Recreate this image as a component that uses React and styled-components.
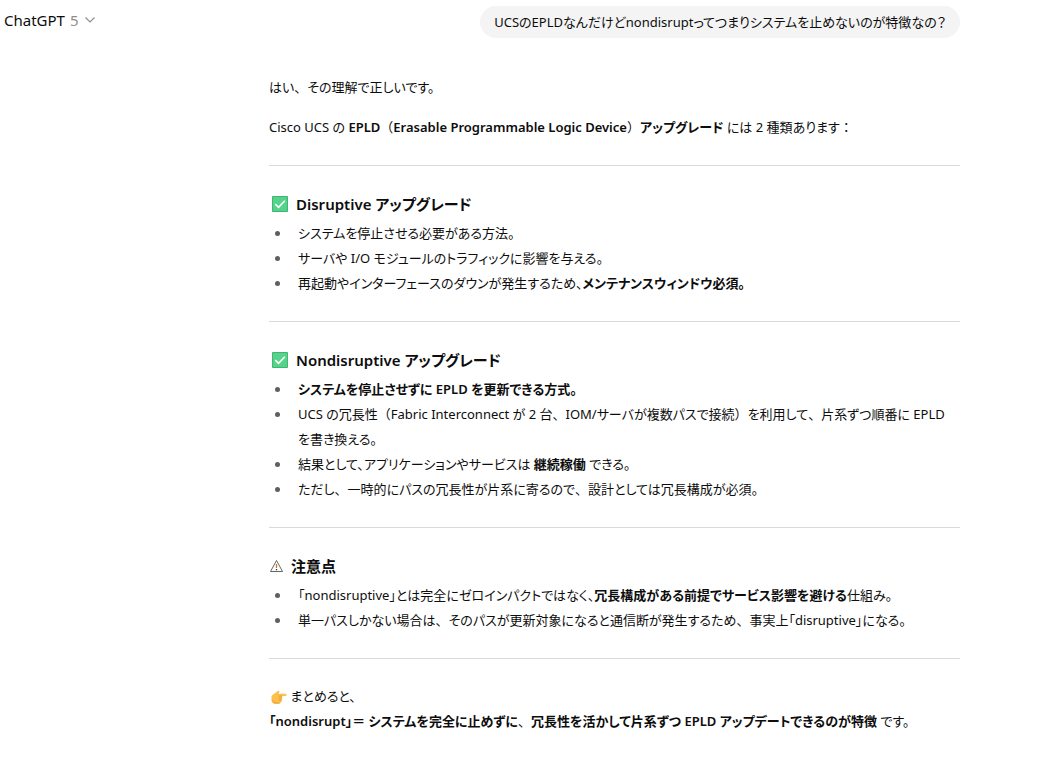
import React from "react";
import styled, { createGlobalStyle } from "styled-components";

const GlobalStyle = createGlobalStyle`
  *, *::before, *::after { box-sizing: border-box; }
  body {
    margin: 0;
    background: #fff;
    color: #0d0d0d;
    font-family: "Noto Sans", "Noto Sans CJK JP", sans-serif;
    font-size: 13px;
    line-height: 25px;
    font-feature-settings: "palt";
  }
`;

const Page = styled.div`
  display: flex;
  align-items: flex-start;
  padding-right: 80px;
`;

const ModelBar = styled.header`
  flex: 0 0 269px;
  padding: 8px 4px;
`;

const ModelButton = styled.button`
  display: flex;
  align-items: center;
  gap: 5px;
  padding: 0;
  border: 0;
  background: none;
  color: inherit;
  font: inherit;
  font-size: 15px;
  line-height: 24px;
  cursor: pointer;
`;

const Version = styled.span`
  color: #8f8f8f;
`;

const Thread = styled.main`
  flex: 1;
  min-width: 0;
  display: flex;
  flex-direction: column;
  padding: 6px 0 24px;
`;

const UserBubble = styled.div`
  align-self: flex-end;
  padding: 4px 14px;
  border-radius: 16px;
  background: #f4f4f4;
  line-height: 24px;
`;

const Answer = styled.article`
  padding-top: 37px;
`;

const Paragraph = styled.p`
  margin: 0 0 15px;

  &:last-child { margin-bottom: 0; }
`;

const Divider = styled.hr`
  height: 1px;
  margin: 25px 0;
  border: 0;
  background: #d9d9d9;
`;

const Heading = styled.h3`
  display: flex;
  align-items: center;
  gap: 8px;
  margin: 0 0 4px;
  font-size: 15px;
  font-weight: 600;
  line-height: 26px;
`;

const List = styled.ul`
  margin: 0;
  padding: 0;
  list-style: none;
`;

const Item = styled.li`
  display: grid;
  grid-template-columns: 29px 1fr;

  &::before {
    content: "";
    width: 5px;
    height: 5px;
    margin: 10px 0 0 6px;
    border-radius: 50%;
    background: #5f5f5f;
  }
`;

const Strong = styled.strong`
  font-weight: 600;
`;

/* Punctuation set at its full em width instead of the proportional one. */
const Full = styled.span`
  font-feature-settings: normal;
  font-weight: 400;
`;

const Phrase = styled.span`
  white-space: nowrap;
`;

const Icon = styled.svg`
  flex: none;
  width: ${(p) => p.$size}px;
  height: ${(p) => p.$size}px;
  margin-left: ${(p) => p.$inset || 0}px;
  vertical-align: -4px;
`;

const CheckIcon = () => (
  <Icon $size={16} $inset={3} viewBox="0 0 17 17" role="img" aria-label="チェック">
    <rect width="17" height="17" rx="1" fill="#3fb573" />
    <rect x="1" y="1" width="15" height="15" rx="1" fill="#55d38b" />
    <path d="M3.5 8.6 7 12l6.6-7" fill="none" stroke="#fff" strokeWidth="1.7" />
  </Icon>
);

const WarningIcon = () => (
  <Icon $size={14} viewBox="0 0 14 14" role="img" aria-label="注意">
    <path d="M7.500 1.500 13.500 12.500H1.500z" fill="#fff" stroke="#555" strokeWidth="0.9" strokeLinejoin="round" />
    <path d="M7.500 5v4" stroke="#c87820" strokeWidth="1.3" />
    <path d="M7.500 10v1.300" stroke="#333" strokeWidth="1.3" />
  </Icon>
);

const PointIcon = () => (
  <Icon $size={16} $inset={2} viewBox="0 0 16 16" role="img" aria-label="右を指す手">
    <path
      d="M.5 7.2C1.8 5 3.6 4.600 5 3.400 6 2.500 6.800 1.400 7.800 1.700c1 .4.6 1.700-.3 3.100h6.900c1.500 0 1.500 2.300 0 2.300h-3.600c1 .5.9 1.800 0 2.100.7.6.500 1.700-.3 2 .5.8.100 1.700-.8 1.900-.2 1.200-1 1.600-2.200 1.600H4.200C1.800 14.700.5 13 .5 10.500z"
      fill="#fdc04a"
    />
    <path d="M7.600 7.100h3.400M7.800 9.200h3M7.800 11.200h2.600" stroke="#e58a2e" strokeWidth="0.7" fill="none" />
    <path d="M.5 10c.5 3 2 4.700 4.300 4.700h2.700c1 0 1.900-.3 2.200-1.400-3.700.5-7.200.2-9.200-3.300z" fill="#f0953a" opacity="0.7" />
  </Icon>
);

const Chevron = () => (
  <Icon $size={12} viewBox="0 0 12 12" aria-hidden="true">
    <path d="M1.500 3.500 6 8l4.500-4.500" fill="none" stroke="#8f8f8f" strokeWidth="1.200" />
  </Icon>
);

export default function App() {
  return (
    <>
      <GlobalStyle />
      <Page>
        <ModelBar>
          <ModelButton type="button">
            <span>ChatGPT</span>
            <Version>5</Version>
            <Chevron />
          </ModelButton>
        </ModelBar>
        <Thread>
          <UserBubble>UCSのEPLDなんだけどnondisruptってつまりシステムを止めないのが特徴なの？</UserBubble>
          <Answer>
            <Paragraph>はい<Full>、</Full>その理解で正しいです。</Paragraph>
            <Paragraph>
              Cisco UCS の{" "}
              <Strong>
                EPLD<Full>（</Full>Erasable Programmable Logic Device<Full>）</Full>アップグレード
              </Strong>{" "}
              には 2 種類あります<Full>：</Full>
            </Paragraph>
            <Divider />
            <Heading>
              <CheckIcon />
              Disruptive アップグレード
            </Heading>
            <List>
              <Item><span>システムを停止させる必要がある方法。</span></Item>
              <Item><span>サーバや I/O モジュールのトラフィックに影響を与える。</span></Item>
              <Item>
                <span>再起動やインターフェースのダウンが発生するため、<Strong>メンテナンスウィンドウ必須。</Strong></span>
              </Item>
            </List>
            <Divider />
            <Heading>
              <CheckIcon />
              Nondisruptive アップグレード
            </Heading>
            <List>
              <Item><Strong>システムを停止させずに EPLD を更新できる方式。</Strong></Item>
              <Item>
                <span>
                  UCS の冗長性<Full>（</Full>Fabric Interconnect が 2 台<Full>、</Full>IOM/サーバが複数パスで接続<Full>）</Full>を利用して<Full>、</Full>片系ずつ順番に EPLD <Phrase>を書き換える。</Phrase>
                </span>
              </Item>
              <Item>
                <span>結果として、アプリケーションやサービスは <Strong>継続稼働</Strong> できる。</span>
              </Item>
              <Item>
                <span>ただし<Full>、</Full>一時的にパスの冗長性が片系に寄るので<Full>、</Full>設計としては冗長構成が必須。</span>
              </Item>
            </List>
            <Divider />
            <Heading>
              <WarningIcon />
              注意点
            </Heading>
            <List>
              <Item>
                <span>「nondisruptive」とは完全にゼロインパクトではなく、<Strong>冗長構成がある前提でサービス影響を避ける</Strong>仕組み。</span>
              </Item>
              <Item>
                <span>単一パスしかない場合は<Full>、</Full>そのパスが更新対象になると通信断が発生するため<Full>、</Full>事実上「disruptive」になる。</span>
              </Item>
            </List>
            <Divider />
            <Paragraph>
              <PointIcon /> まとめると、
              <br />
              <Strong>
                「nondisrupt」＝ システムを完全に止めずに<Full>、</Full>冗長性を活かして片系ずつ EPLD アップデートできるのが特徴
              </Strong>{" "}
              です。
            </Paragraph>
          </Answer>
        </Thread>
      </Page>
    </>
  );
}
